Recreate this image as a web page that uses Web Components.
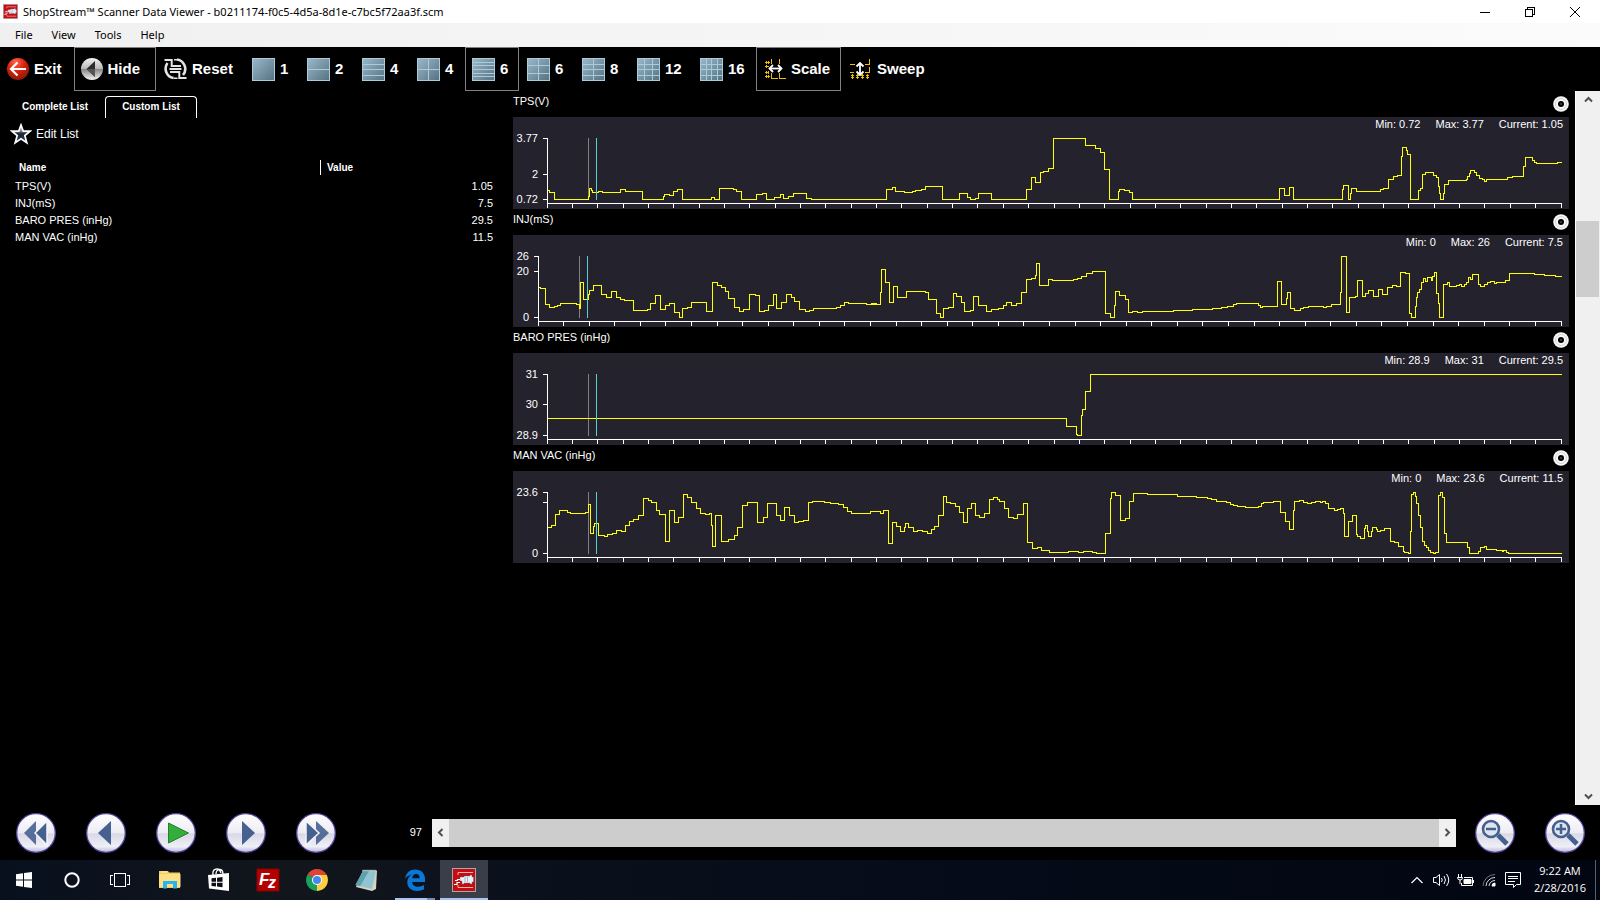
<!DOCTYPE html>
<html lang="en">
<head>
<meta charset="utf-8">
<title>ShopStream Scanner Data Viewer</title>
<style>
  html, body {
    height: 100%;
    margin: 0;
    background: #000;
  }

  body {
    font: 11px/13px "Liberation Sans", Arial, sans-serif;
    color: #fff;
    overflow: hidden;
  }
</style>
</head>
<body>
<desktop-screen></desktop-screen>

<script>
/** Attaches an open shadow root filled from the given markup. */
const shadow = (el, html) => {
  const template = document.createElement('template')
  template.innerHTML = html
  const root = el.attachShadow({ mode: 'open' })
  root.appendChild(template.content.cloneNode(true))
  return root
}

const resetButton = `
  button {
    appearance: none;
    margin: 0;
    padding: 0;
    border: 0;
    background: none;
    color: inherit;
    font: inherit;
  }
  svg { display: block; flex: none; }
`

const scannerLogo = `
  <rect x=".5" y=".5" width="23" height="23" fill="#c40d12" stroke="#a9a9ac"/>
  <path d="M6 7V4.500h15M6 17v2.500h15" fill="none" stroke="#ffb0a8"/>
  <path d="M12 8h6v-1h2v2h1.500v5H20v2h-2v-1h-6v1h-2v-3H8V9h4z" fill="#e6f1f7" stroke="#667" stroke-width=".4"/>
  <path d="M13 9v5M15.500 9v5" stroke="#8ab" stroke-width=".8"/>
  <path d="M8 11.500H5.500v1H3M8 14.500H5v2H2" fill="none" stroke="#fff" stroke-width="1.200"/>
`

const ICONS = {
  exit: `<svg width="22" height="22" viewBox="0 0 22 22">
    <defs><radialGradient id="g" cx=".4" cy=".2" r=".9"><stop offset="0" stop-color="#ff6a4a"/><stop offset=".45" stop-color="#d8200c"/><stop offset="1" stop-color="#7a1a08"/></radialGradient></defs>
    <circle cx="11" cy="11" r="11" fill="url(#g)"/>
    <path d="M19 11H4M10.500 4.500 4 11l6.500 6.500" fill="none" stroke="#fff" stroke-width="2.200"/></svg>`,
  hide: `<svg width="22" height="22" viewBox="0 0 22 22">
    <defs><linearGradient id="g" x2="0" y2="1"><stop offset="0" stop-color="#f2f2f0"/><stop offset=".5" stop-color="#b8b8b8"/><stop offset=".52" stop-color="#8a8a8a"/><stop offset="1" stop-color="#f4f4f4"/></linearGradient></defs>
    <circle cx="11" cy="11" r="11" fill="url(#g)"/>
    <path d="M14 3v16L5.500 11z" fill="#2c2c2c"/><path d="M14 11v8L5.500 11z" fill="#555"/></svg>`,
  reset: `<svg width="23" height="22" viewBox="0 0 23 22" fill="none" stroke="#e4e4e4">
    <path d="M9.500 20A9.500 9.500 0 0 1 3.500 5M13 1.500A9.500 9.500 0 0 1 19 17" stroke-width="2.600"/>
    <path d="M9.500 20.300h4M13 1.700h-3" stroke-width="1.600"/>
    <path d="M.5 2h7.200v7M22.500 20h-7.200v-7" stroke-width="2"/>
    <path d="M8 8h9M5.500 11h12M6 14h9" stroke-width="1.800"/></svg>`,
  scale: `<svg width="23" height="22" viewBox="0 0 23 22" fill="none" shape-rendering="crispEdges">
    <path d="M2 4.500h5M2 8.500h4M2 14.500h4M2 18.500h5M3.500 3v3M5.500 3v3M3.500 7v3M5.500 13v3M3.500 13v3M3.500 17v3M5.500 17v3M8.500 1v5M16.500 1v5M8.500 15v5.500h6M16.500 15v5.500h6" stroke="#f0c000"/>
    <path d="M7 10.500h11" stroke="#fff" stroke-width="1.800" shape-rendering="auto"/>
    <path d="m10 7-3.500 3.500L10 14M15 7l3.500 3.500L15 14" stroke="#fff" stroke-width="1.800" shape-rendering="auto"/></svg>`,
  sweep: `<svg width="23" height="22" viewBox="0 0 23 22" fill="none" shape-rendering="crispEdges">
    <path d="M1 6.500h5M16 6.500h4.500V1M1 14.500h4M16 14.500h4.500V9M3.500 16v5M8.500 16v5M13.500 16v5M18.500 16v5M2 17.500h3M7 17.500h3M12 17.500h3M17 17.500h3M2 19.500h3M7 19.500h3M12 19.500h3M17 19.500h3" stroke="#f0c000"/>
    <path d="M11 5.500v11" stroke="#fff" stroke-width="1.800" shape-rendering="auto"/>
    <path d="M7.500 8.500 11 5l3.500 3.500M7.500 13.500 11 17l3.500-3.500" stroke="#fff" stroke-width="1.800" shape-rendering="auto"/></svg>`,
  star: `<svg width="22" height="22" viewBox="0 0 22 22">
    <defs><linearGradient id="g" x2="0" y2="1"><stop offset=".3" stop-color="#9098a0"/><stop offset=".5" stop-color="#20242c"/><stop offset="1" stop-color="#1c4878"/></linearGradient></defs>
    <path d="m11 2 2.300 6.200H20l-5.200 4.300 2 7.300L11 15.800l-5.800 4 2-7.300L2 8.200h6.700z" fill="url(#g)" stroke="#fff" stroke-width="1.700"/></svg>`,
  logo: `<svg width="15" height="15" viewBox="0 0 24 24">${scannerLogo}</svg>`,
  minimize: `<svg width="10" height="10" shape-rendering="crispEdges"><path d="M0 5.500h10" stroke="#000"/></svg>`,
  restore: `<svg width="10" height="10" fill="none" stroke="#000" shape-rendering="crispEdges"><path d="M.5 2.500h7v7h-7zM2.500 2V.5h7v7H8"/></svg>`,
  close: `<svg width="10" height="10"><path d="m0 0 10 10M10 0 0 10" stroke="#000"/></svg>`,
  record: `<svg width="16" height="16" viewBox="0 0 16 16"><circle cx="8" cy="8" r="7.800" fill="#f8f8f8"/><circle cx="8" cy="8" r="5.500" fill="none" stroke="#c8c8c8" stroke-width=".8"/><circle cx="8" cy="8" r="3" fill="#000"/><circle cx="8" cy="8" r="1" fill="#444"/></svg>`,
  first: `<path d="M20 8v24L8 20z" opacity=".9"/><path d="M31 8v24L19 20z" stroke="#f4f4fa" stroke-width="1.500"/>`,
  previous: `<path d="M25 8v24L12 20z"/>`,
  play: `<path d="M12.500 10v20l20-10z" fill="#34ad3c" stroke="#23802c"/>`,
  next: `<path d="M16 8v24l13-12z"/>`,
  last: `<path d="M20 8v24l13-12z" opacity=".9"/><path d="M10 8v24l13-12z" stroke="#f4f4fa" stroke-width="1.500"/>`,
  'zoom-out': `<path d="m23 22 9 9" stroke="#44608e" stroke-width="5"/><circle cx="16" cy="16" r="8" fill="#dfe4ee" stroke="#44608e" stroke-width="2.600"/><path d="M11 16h10" stroke="#44608e" stroke-width="2.500"/>`,
  'zoom-in': `<path d="m23 22 9 9" stroke="#44608e" stroke-width="5"/><circle cx="16" cy="16" r="8" fill="#dfe4ee" stroke="#44608e" stroke-width="2.600"/><path d="M11 16h10M16 11v10" stroke="#44608e" stroke-width="2.500"/>`,
  start: `<svg width="16" height="16" viewBox="0 0 16 16" fill="#fff"><path d="M0 2.300 7 1.300v6.200H0zM8 1.100 16 0v7.500H8zM0 8.500h7v6.200l-7-1zM8 8.500h8V16l-8-1.100z"/></svg>`,
  cortana: `<svg width="16" height="16"><circle cx="8" cy="8" r="6.700" fill="none" stroke="#fff" stroke-width="2"/></svg>`,
  tasks: `<svg width="20" height="16" fill="none" stroke="#fff" shape-rendering="crispEdges"><path d="M4.500 1.500h11v13h-11zM3 3.500H.5v9H3M17 3.500h2.500v9H17"/></svg>`,
  explorer: `<svg width="22" height="20" viewBox="0 0 22 20"><path d="M0 1h9l1 1.500h11V18H0z" fill="#f3cf62"/><path d="M0 4h21.500v13H0z" fill="#fddf86"/><path d="M4 18.500V11h14v7.500h-4V14H8v4.500z" fill="#28b4f0"/><path d="M2 2h6" stroke="#fff3c0"/></svg>`,
  store: `<svg width="22" height="24" viewBox="0 0 22 24"><path d="M0 7 21 5v18L1 20.500z" fill="#fff"/><path d="M5 7C4 0 11-1 13 5M8 6c0-6 7-6 7 0" fill="none" stroke="#fff" stroke-width="1.300"/><path d="m3.500 10.300 4.500-.5v3.900H3.500zM9 9.700l5.500-.6v4.600H9zM3.500 14.700H8v3.800l-4.500-.4zM9 14.700h5.500v4.500L9 18.600z" fill="#0b0f16"/></svg>`,
  filezilla: `<svg width="24" height="24" viewBox="0 0 24 24"><rect x="1" y="1" width="22" height="22" fill="#b30000" stroke="#8a0000" stroke-width="2" stroke-dasharray="1 1"/><text x="3" y="17" font-family="Liberation Sans" font-style="italic" font-weight="700" font-size="17" fill="#fff">F</text><text x="12" y="20" font-family="Liberation Sans" font-style="italic" font-weight="700" font-size="16" fill="#fff">z</text></svg>`,
  chrome: `<svg width="22" height="22" viewBox="0 0 22 22"><path d="M11 11 1.500 5.500A11 11 0 0 1 20.500 5.500z" fill="#dc4437"/><path d="M11 11 20.500 5.500A11 11 0 0 1 11 22z" fill="#ffcd40"/><path d="M11 11v11A11 11 0 0 1 1.500 5.500z" fill="#18a05f"/><path d="M11 6h9.800L15 14l-4 8 1-8z" fill="#ffcd40"/><path d="M1.500 5.500 6.500 14 12 15z" fill="#18a05f"/><circle cx="11" cy="11" r="5" fill="#fff"/><circle cx="11" cy="11" r="4" fill="#4688f1"/></svg>`,
  notepad: `<svg width="23" height="22" viewBox="0 0 23 22"><path d="M8 1.500h14L21 20l-4 2-16-4z" fill="#d8d2c0"/><path d="M8 2h13l-4 18L.5 16z" fill="#8fc4d0"/><path d="M8 2h6L5 17.200.5 16z" fill="#5f9fae"/><path d="M7.500 1.500h14" stroke="#eee" stroke-width="1.500" stroke-dasharray="1 1"/></svg>`,
  edge: `<svg width="20" height="22" viewBox="0 0 20 22"><path d="M0 9.800C1 3.500 5 .4 10.300.4c6 0 9.700 4.100 9.700 9.600v3H7c.3 3.200 3 4.700 6 4.700 2.300 0 4.300-.6 6-1.700v4.300c-2 1.100-4.500 1.600-7 1.600C6 21.900 2.300 18.300 2.300 13.200c0-3.300 1.700-6 4.700-7.700C4 6.200 1.600 7.600 0 9.800zM7.200 9.200h7.500c0-2.800-1.400-4.200-3.700-4.200-2.200 0-3.500 1.700-3.800 4.200z" fill="#0a78d7"/></svg>`,
  scanner: `<svg width="24" height="24" viewBox="0 0 24 24">${scannerLogo}</svg>`,
  'tray-up': `<svg width="12" height="8"><path d="m.5 7 5.500-5.500L11.500 7" fill="none" stroke="#fff" stroke-width="1.200"/></svg>`,
  volume: `<svg width="17" height="14" viewBox="0 0 17 14" fill="none" stroke="#fff"><path d="M.5 4.500h2.500L6.500 1.500v11L3 9.500H.5zM8.500 5q1.500 2 0 4M11 3q3 4 0 8M13.500 1q4.500 6 0 12"/></svg>`,
  battery: `<svg width="17" height="13" viewBox="0 0 17 13" fill="none" stroke="#fff"><path d="M7 3.500h8.500v8H4.500V9M16.500 6v3"/><path d="M7 5.500h7v4H7z" fill="#fff"/><path d="M1.500 0v3M4.500 0v3M.5 3.500h5q0 2.500-2.500 2.500T.5 3.500M3 6v4"/></svg>`,
  wifi: `<svg width="14" height="14" viewBox="0 0 14 14" fill="none" stroke="#bbb"><path d="M1 13A12 12 0 0 1 13 1.500" opacity=".6"/><path d="M4 13a9 9 0 0 1 9-8.500M7 13a6 6 0 0 1 6-5.500" stroke="#ddd"/><path d="M10 13a3 3 0 0 1 3-3v3z" fill="#fff" stroke="#fff"/></svg>`,
  notes: `<svg width="16" height="17" viewBox="0 0 16 17" fill="none" stroke="#fff"><path d="M.5.5h15v12h-4L8.500 15.500v-3H.5zM3 4.500h10M3 6.500h10M3 9.500h7"/></svg>`,
}

/** Rows-by-columns preview used by the layout buttons. */
const layoutIcon = (cols, rows) => {
  let d = 'M.5.5h22v22H.5z'
  for (let i = 1; i < cols; i++) d += `M${Math.round(i * 22 / cols) + 0.5} 0v23`
  for (let i = 1; i < rows; i++) d += `M0 ${Math.round(i * 22 / rows) + 0.5}h23`
  return `<svg width="23" height="23" shape-rendering="crispEdges">
    <defs><linearGradient id="g" x2="1" y2="1"><stop offset="0" stop-color="#9dbacd"/><stop offset="1" stop-color="#54707f"/></linearGradient></defs>
    <rect width="23" height="23" fill="url(#g)"/><path d="${d}" fill="none" stroke="#a9cbdc"/></svg>`
}

class WindowTitle extends HTMLElement {
  constructor() {
    super()
    shadow(this, `
      <style>
        ${resetButton}
        :host {
          display: flex;
          align-items: center;
          height: 23px;
          padding: 0 3px;
          background: #fff;
          color: #000;
          font: 11px/16px "Noto Sans", "Open Sans", sans-serif;
        }
        .text { flex: 1; padding-left: 5px; }
        button { display: grid; place-items: center; width: 45px; height: 20px; }
      </style>
      ${ICONS.logo}
      <span class="text"><slot></slot></span>
      <button aria-label="Minimize">${ICONS.minimize}</button>
      <button aria-label="Restore">${ICONS.restore}</button>
      <button aria-label="Close">${ICONS.close}</button>
    `)
  }
}

class MenuBar extends HTMLElement {
  constructor() {
    super()
    const items = this.getAttribute('items').split(' ')
    shadow(this, `
      <style>
        ${resetButton}
        :host {
          display: flex;
          gap: 19px;
          height: 24px;
          padding-left: 15px;
          background: linear-gradient(90deg, #f0f0f0, #fbfbfb);
          color: #000;
          font: 11px/24px "Noto Sans", "Open Sans", sans-serif;
        }
      </style>
      ${items.map((item) => `<button>${item}</button>`).join('')}
    `)
  }
}

class ToolButton extends HTMLElement {
  constructor() {
    super()
    const grid = this.getAttribute('grid')
    const icon = grid ? layoutIcon(...grid.split('x').map(Number)) : ICONS[this.getAttribute('icon')]
    shadow(this, `
      <style>
        ${resetButton}
        :host { display: flex; }
        button {
          display: flex;
          align-items: center;
          gap: 5px;
          height: 44px;
          padding: 0 10px 0 6px;
          border: 1px solid transparent;
          font: bold 15px/18px "Liberation Sans", Arial, sans-serif;
        }
        :host([pressed]) button { border-color: #808080; }
        :host([wide]) button { padding-right: 15px; }
        :host([grid]) button { width: 54px; padding-right: 0; }
        :host([grid][wide]) button { width: 62px; }
      </style>
      <button>${icon}<slot></slot></button>
    `)
  }
}

class TabStrip extends HTMLElement {
  constructor() {
    super()
    shadow(this, `
      <style>
        ${resetButton}
        :host {
          display: flex;
          padding: 5px 0 0 5px;
          font: bold 10px/12px "Liberation Sans", Arial, sans-serif;
        }
        div { display: flex; }
        button {
          height: 22px;
          padding: 0 16px 2px;
          border: 1px solid transparent;
          border-bottom: 0;
          border-radius: 4px 4px 0 0;
        }
        button[aria-selected=true] { border-color: #fff; }
      </style>
      <div role="tablist">
        <button role="tab" aria-selected="false">Complete List</button>
        <button role="tab" aria-selected="true">Custom List</button>
      </div>
    `)
  }
}

class DataList extends HTMLElement {
  constructor() {
    super()
    const rows = [
      ['TPS(V)', '1.05'],
      ['INJ(mS)', '7.5'],
      ['BARO PRES (inHg)', '29.5'],
      ['MAN VAC (inHg)', '11.5'],
    ]
    shadow(this, `
      <style>
        ${resetButton}
        :host { display: block; }
        .edit {
          display: flex;
          align-items: center;
          gap: 4px;
          height: 32px;
          padding-left: 10px;
          font-size: 12px;
        }
        table {
          width: 483px;
          margin: 10px 0 0 15px;
          border-collapse: collapse;
          table-layout: fixed;
        }
        th {
          height: 15px;
          padding: 0 0 0 4px;
          text-align: left;
          font: bold 10px/15px "Liberation Sans", Arial, sans-serif;
        }
        th + th { padding-left: 6px; border-left: 1px solid #fff; }
        .name { width: 301px; }
        td { height: 17px; padding: 0; }
        td + td { padding-right: 5px; text-align: right; }
        tbody::before { content: ""; display: block; height: 3px; }
      </style>
      <button class="edit">${ICONS.star}Edit List</button>
      <table>
        <thead><tr><th class="name">Name</th><th>Value</th></tr></thead>
        <tbody>${rows.map(([name, value]) => `<tr><td>${name}</td><td>${value}</td></tr>`).join('')}</tbody>
      </table>
    `)
  }
}

// Traces are held as three recorded chunks per signal. Every chunk is a list of
// "x y" pairs on a grid three times finer than the plot; the level holds until the next x.
const CHUNK_X = [-9, 1071, 2151]

const SIGNALS = [
  {
    name: 'TPS(V)', min: '0.72', max: '3.77', current: '1.05', axis: 34, base: 81,
    ticks: [[21, '3.77'], [57, '2'], [82, '0.72']],
    trace: [
      '113 301,118 307,134 328,236 320,238 296,245 301,248 307,265 304,276 307,331 299,345 304,396 328,461 319,463 313,478 316,491 304,502 299,517 328,604 322,614 328,628 295,669 299,680 304,694 328,739 314,756 310,770 328,794 322,811 314,821 325,835 319,851 310,890 325,904 328',
      '50 298,67 292,76 304,103 307,127 304,137 301,154 298,167 289,217 328,268 310,292 322,302 328,316 325,325 310,365 328,469 298,484 262,497 277,512 248,520 244,536 235,550 145,646 166,676 175,692 187,703 238,718 328,745 304,749 298,762 301,778 307,787 328',
      '149 295,163 316,178 292,190 328,338 298,341 286,355 328,362 310,364 295,379 304,452 298,461 295,476 269,491 259,502 256,515 200,517 172,530 182,533 193,541 328,565 301,572 295,577 268,578 253,586 247,611 256,620 263,624 290,628 310,631 328,641 310,643 283,655 271,709 268,713 259,718 250,722 241,732 247,740 256,748 265,757 268,764 274,768 268,833 262,848 259,880 229,886 202,907 211,914 217,918 220,982 217',
    ],
  },
  {
    name: 'INJ(mS)', min: '0', max: '26', current: '7.5', axis: 25, base: 435,
    ticks: [[21, '26'], [36, '20'], [82, '0']],
    trace: [
      '86 592,91 595,107 643,117 652,134 649,143 646,152 640,199 643,209 655,211 577,220 628,235 612,238 601,250 586,275 613,289 622,305 604,320 622,331 628,343 631,370 662,388 661,412 658,422 640,436 616,452 658,467 646,478 640,493 667,508 682,517 655,532 652,545 637,590 664,607 577,622 586,634 592,647 604,656 625,673 652,687 664,701 658,718 613,736 616,748 664,762 660,774 646,790 613,799 655,814 637,829 613,845 622,854 634,868 658,885 664,899 660,910 655,978 652,991 646,1003 637,1016 640,1070 643,1086 640,1098 643',
      '5 640,17 643,32 607,34 538,47 577,58 637,70 589,83 622,110 604,166 607,176 628,200 670,211 682,220 655,235 652,250 610,260 619,275 637,284 664,300 661,310 619,325 646,349 664,365 658,386 655,401 646,410 637,425 646,440 640,455 607,469 569,484 565,496 556,499 520,508 586,536 569,548 571,610 568,622 565,634 559,650 550,666 544,706 670,721 682,733 646,736 604,749 616,766 628,775 667,787 664,802 667,816 664,909 661,966 658,1026 655,1053 652,1071 649,1080 649',
      '10 643,20 640,84 646,91 652,98 649,142 574,155 643,170 625,172 607,181 655,194 661,211 655,220 652,235 649,280 652,290 649,303 643,332 607,334 499,350 667,358 622,376 619,382 571,397 619,406 610,416 601,431 619,446 598,456 613,472 592,487 586,498 589,511 547,527 550,538 670,544 682,556 650,560 622,563 607,568 598,575 577,579 565,586 574,593 562,604 571,607 559,614 547,620 610,625 640,628 682,639 640,640 583,652 577,658 589,680 586,688 583,695 589,704 583,710 577,716 562,722 568,727 553,744 556,746 583,751 589,764 583,773 577,782 574,792 580,800 577,827 571,838 550,860 549,912 553,943 556,976 559',
    ],
  },
  {
    name: 'BARO PRES (inHg)', min: '28.9', max: '31', current: '29.5', axis: 34, base: 84,
    ticks: [[21, '31'], [51, '30'], [82, '28.9']],
    trace: ['113 280', '589 304,619 328,622 331,634 272,637 253,646 199,661 148', ''],
  },
  {
    name: 'MAN VAC (inHg)', min: '0', max: '23.6', current: '11.5', axis: 34, base: 438,
    ticks: [[21, '23.6'], [31, ''], [82, '0']],
    trace: [
      '113 607,125 601,137 569,148 556,172 562,182 565,227 562,236 538,242 625,250 605,253 595,265 631,283 634,293 628,306 625,320 616,333 619,347 601,358 589,370 583,386 571,400 520,415 526,425 532,439 556,449 568,466 649,479 556,493 592,505 577,520 508,533 517,545 532,560 550,572 565,585 568,598 565,605 600,607 664,617 571,634 649,656 643,672 631,683 607,697 541,711 532,743 592,760 577,772 535,799 571,811 586,824 547,838 571,853 592,866 589,880 586,894 532,907 529,943 532,960 535,985 538,999 547,1012 559,1025 565,1080 559',
      '30 565,39 556,54 655,67 592,79 604,91 619,103 607,106 595,115 607,129 619,142 616,157 619,171 625,183 613,193 604,206 571,220 514,230 532,242 535,256 544,268 562,280 592,292 550,305 535,317 571,329 577,343 565,358 523,369 517,382 523,388 529,403 550,416 577,430 580,442 568,460 535,472 652,487 670,501 667,514 676,539 682,594 679,625 682,639 679,666 682,678 685,706 625,721 520,724 502,737 511,752 586,766 580,778 529,790 505,831 508,922 514,979 517,1012 520,1024 523,1040 529,1068 532,1080 538',
      '10 541,22 544,46 547,84 544,94 535,101 532,130 529,152 562,167 589,179 613,190 555,193 529,207 526,220 532,232 535,245 532,256 529,271 532,277 529,285 535,296 550,312 556,322 553,332 550,341 565,343 634,355 589,367 571,380 628,383 634,391 640,403 610,405 601,412 619,416 634,425 619,428 607,440 613,443 619,452 616,463 610,482 649,494 652,505 664,520 679,524 682,535 685,541 620,544 508,550 502,556 514,560 535,565 572,572 607,578 649,584 661,590 667,596 675,602 682,610 685,616 682,625 511,632 502,637 517,643 625,649 652,712 668,719 685,744 679,752 667,763 664,769 673,800 676,816 680,821 676,830 682,834 685',
    ],
  },
]

const PLOT = { width: 1056, height: 92, right: 1048, divisions: 40 }

class SignalChart extends HTMLElement {
  set signal(s) {
    const cell = (v) => Math.floor(v / 3) + 0.5
    let line = ''
    s.trace.forEach((chunk, i) => {
      for (const point of chunk.split(',').filter(Boolean)) {
        const [x, y] = point.split(' ').map(Number)
        const px = cell(x + CHUNK_X[i])
        const py = cell(y - s.base)
        line += line ? `H${px}V${py}` : `M${px} ${py}`
      }
    })
    line += `H${PLOT.right + 0.5}`

    const step = (PLOT.right - s.axis) / PLOT.divisions
    let axis = `M${s.axis + 0.5} 21V86.5H${PLOT.right + 1}`
    for (let i = 0; i <= PLOT.divisions; i++) axis += `M${Math.floor(s.axis + i * step) + 0.5} 86v5`
    for (const [y] of s.ticks) axis += `M${s.axis - 4} ${y + 0.5}h5`

    shadow(this, `
      <style>
        ${resetButton}
        :host { display: block; }
        header {
          display: flex;
          justify-content: space-between;
          height: 26px;
          line-height: 20px;
        }
        header button { align-self: flex-start; padding-top: 5px; }
        .plot { position: relative; height: ${PLOT.height}px; background: #24222d; }
        .plot svg { width: 100%; height: 100%; }
        .plot path { fill: none; stroke: #fff; vector-effect: non-scaling-stroke; shape-rendering: crispEdges; }
        .plot .trace { stroke: #ff0; }
        .plot .mark { stroke: #808080; }
        .plot .cursor { stroke: #5cd0d0; }
        .stats { position: absolute; top: 0; right: 6px; display: flex; gap: 15px; line-height: 14px; }
        .tick { position: absolute; left: 0; width: ${s.axis - 9}px; margin-top: -6px; text-align: right; }
      </style>
      <header><span>${s.name}</span><button aria-label="${s.name} options">${ICONS.record}</button></header>
      <div class="plot">
        <svg viewBox="0 0 ${PLOT.width} ${PLOT.height}" preserveAspectRatio="none">
          <path class="mark" d="M${s.axis + 41.5} 21v61.500"/>
          <path class="trace" d="${line}"/>
          <path class="cursor" d="M${s.axis + 49.5} 21v61.500"/>
          <path d="${axis}"/>
        </svg>
        ${s.ticks.map(([y, text]) => text && `<span class="tick" style="top: ${y}px">${text}</span>`).join('')}
        <div class="stats"><span>Min: ${s.min}</span><span>Max: ${s.max}</span><span>Current: ${s.current}</span></div>
      </div>
    `)
  }
}

class ScrollBar extends HTMLElement {
  constructor() {
    super()
    const vertical = this.hasAttribute('vertical')
    const parts = this.getAttribute('parts').split(' ').map((n) => `minmax(0, ${n}fr)`).join(' ')
    const arrow = (d) => `<svg width="9" height="9"><path d="${d}" fill="none" stroke="#505050" stroke-width="2"/></svg>`
    shadow(this, `
      <style>
        ${resetButton}
        :host { display: flex; background: #f0f0f0; }
        :host([vertical]) { flex-direction: column; border-left: 1px solid #fff; }
        button { display: grid; place-items: center; flex: 0 0 17px; }
        .track { flex: 1; display: grid; grid-template-columns: ${parts}; }
        :host([vertical]) .track { grid-template: ${parts} / 1fr; }
        .thumb { grid-column: 2; background: #cdcdcd; }
        :host([vertical]) .thumb { grid-area: 2 / 1; margin-right: 1px; }
      </style>
      <button aria-label="Back">${arrow(vertical ? 'M1 6.500 4.500 3 8 6.500' : 'M6.500 1 3 4.500 6.500 8')}</button>
      <div class="track"><div class="thumb"></div></div>
      <button aria-label="Forward">${arrow(vertical ? 'M1 2.500 4.500 6 8 2.500' : 'M2.500 1 6 4.500 2.500 8')}</button>
    `)
  }
}

class RoundButton extends HTMLElement {
  constructor() {
    super()
    const icon = this.getAttribute('icon')
    shadow(this, `
      <style>
        ${resetButton}
        :host { display: block; }
        button { display: block; }
      </style>
      <button aria-label="${icon}">
        <svg width="40" height="40" viewBox="0 0 40 40">
          <defs><linearGradient id="g" x2="0" y2="1"><stop offset="0" stop-color="#fff"/><stop offset=".5" stop-color="#ececf4"/><stop offset=".52" stop-color="#d9d9e6"/><stop offset=".85" stop-color="#efeff6"/><stop offset="1" stop-color="#b9b6dc"/></linearGradient></defs>
          <circle cx="20" cy="20" r="19.300" fill="url(#g)" stroke="#5546a0" stroke-width="1.300"/>
          <g fill="#46618f">${ICONS[icon]}</g>
        </svg>
      </button>
    `)
  }
}

class TaskBar extends HTMLElement {
  constructor() {
    super()
    const system = ['start', 'cortana', 'tasks']
    const apps = ['explorer', 'store', 'filezilla', 'chrome', 'notepad', 'edge', 'scanner']
    const tray = ['tray-up', 'volume', 'battery', 'wifi', 'notes']
    const button = (name) => `<button class="${name}" aria-label="${name}">${ICONS[name]}</button>`
    shadow(this, `
      <style>
        ${resetButton}
        :host {
          display: flex;
          height: 40px;
          background: linear-gradient(90deg, #08101e, #12161c 18%, #0a101c 32%, #050b18 60%, #020612);
        }
        .system, .apps, .tray { display: flex; }
        .apps { gap: 1px; margin-left: 2px; flex: 1; }
        button { display: grid; place-items: center; width: 48px; }
        .edge { background: linear-gradient(90deg, #a9c4f0 32px, #7c8aa8 32px) 4px 100% / 40px 2px no-repeat; }
        .scanner { background: linear-gradient(#a9c4f0, #a9c4f0) 0 100% / 100% 2px no-repeat #3a3e49; }
        .tray button { width: 24px; }
        time {
          width: 70px;
          padding: 2px 0;
          text-align: center;
          font: 11px/17px "Open Sans", "Noto Sans", sans-serif;
        }
        .peek { width: 4px; border-left: 1px solid #5a5e68; }
      </style>
      <div class="system">${system.map(button).join('')}</div>
      <div class="apps">${apps.map(button).join('')}</div>
      <div class="tray">${tray.map(button).join('')}</div>
      <time datetime="2016-02-28T09:22">9:22 AM<br>2/28/2016</time>
      <div class="peek"></div>
    `)
  }
}

class DesktopScreen extends HTMLElement {
  constructor() {
    super()
    this._root = shadow(this, `
      <style>
        :host { display: flex; flex-direction: column; height: 100vh; }
        .tools { display: flex; gap: 1px; height: 44px; }
        main { flex: 1; display: flex; min-height: 0; }
        aside { flex: 0 0 513px; }
        .charts { flex: 1; min-width: 0; margin-right: 6px; }
        main scroll-bar { width: 24px; }
        footer { display: flex; align-items: center; height: 55px; padding: 0 15px 0 16px; }
        .player { display: flex; gap: 30px; }
        output { width: 86px; margin-right: 10px; text-align: right; }
        footer scroll-bar { flex: 1; height: 28px; margin-right: 19px; }
      </style>
      <window-title>ShopStream™ Scanner Data Viewer - b0211174-f0c5-4d5a-8d1e-c7bc5f72aa3f.scm</window-title>
      <menu-bar items="File View Tools Help"></menu-bar>
      <div class="tools">
        <tool-button icon="exit">Exit</tool-button>
        <tool-button icon="hide" pressed wide>Hide</tool-button>
        <tool-button icon="reset">Reset</tool-button>
        <tool-button grid="1x1">1</tool-button>
        <tool-button grid="1x2">2</tool-button>
        <tool-button grid="1x4">4</tool-button>
        <tool-button grid="2x2">4</tool-button>
        <tool-button grid="1x6" pressed>6</tool-button>
        <tool-button grid="2x3">6</tool-button>
        <tool-button grid="2x4">8</tool-button>
        <tool-button grid="3x4" wide>12</tool-button>
        <tool-button grid="4x4" wide>16</tool-button>
        <tool-button icon="scale" pressed>Scale</tool-button>
        <tool-button icon="sweep">Sweep</tool-button>
      </div>
      <main>
        <aside>
          <tab-strip></tab-strip>
          <data-list></data-list>
        </aside>
        <section class="charts"></section>
        <scroll-bar vertical parts="113 76 491"></scroll-bar>
      </main>
      <footer>
        <div class="player">
          <round-button icon="first"></round-button>
          <round-button icon="previous"></round-button>
          <round-button icon="play"></round-button>
          <round-button icon="next"></round-button>
          <round-button icon="last"></round-button>
        </div>
        <output>97</output>
        <scroll-bar parts="0 1 0"></scroll-bar>
        <div class="player">
          <round-button icon="zoom-out"></round-button>
          <round-button icon="zoom-in"></round-button>
        </div>
      </footer>
      <task-bar></task-bar>
    `)
  }

  connectedCallback() {
    const charts = this._root.querySelector('.charts')
    for (const signal of SIGNALS) {
      const chart = document.createElement('signal-chart')
      chart.signal = signal
      charts.appendChild(chart)
    }
  }
}

customElements.define('window-title', WindowTitle)
customElements.define('menu-bar', MenuBar)
customElements.define('tool-button', ToolButton)
customElements.define('tab-strip', TabStrip)
customElements.define('data-list', DataList)
customElements.define('signal-chart', SignalChart)
customElements.define('scroll-bar', ScrollBar)
customElements.define('round-button', RoundButton)
customElements.define('task-bar', TaskBar)
customElements.define('desktop-screen', DesktopScreen)
</script>
</body>
</html>
